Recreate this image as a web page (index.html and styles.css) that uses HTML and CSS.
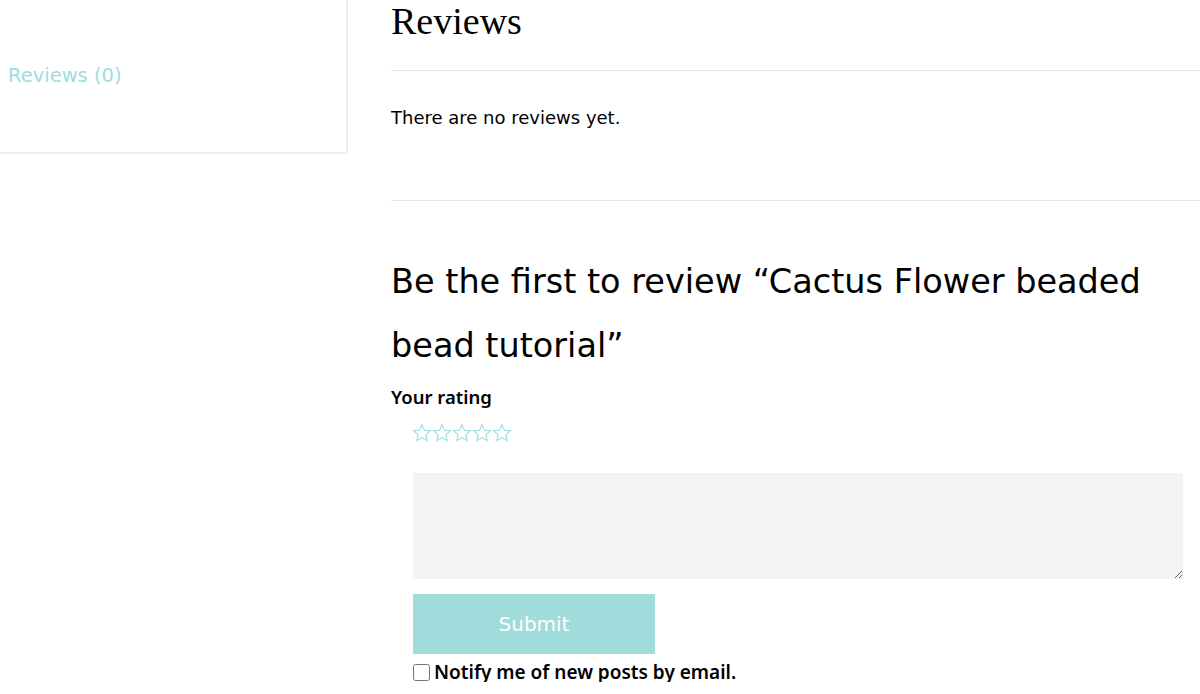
FILE: index.html
```html
<!DOCTYPE html>
<html lang="en">
<head>
<meta charset="utf-8">
<title>Reviews</title>
<link rel="stylesheet" href="styles.css">
</head>
<body>
<div class="page">
  <aside class="sidebar">
    <a class="tab-link" href="#">Reviews (0)</a>
  </aside>
  <main class="content">
    <h2 class="reviews-title">Reviews</h2>
    <hr class="rule rule-top">
    <p class="no-reviews">There are no reviews yet.</p>
    <hr class="rule rule-bottom">
    <h3 class="reply-title">Be the first to review “Cactus Flower beaded bead tutorial”</h3>
    <form class="review-form">
      <label class="rating-label">Your rating</label>
      <div class="stars">
        <svg class="star" viewBox="0 0 20 20"><path d="M10 1.6l2.45 5.6 6.05.55-4.6 4 1.38 5.95L10 14.6l-5.28 3.1 1.38-5.95-4.6-4 6.05-.55z"/></svg>
        <svg class="star" viewBox="0 0 20 20"><path d="M10 1.6l2.45 5.6 6.05.55-4.6 4 1.38 5.95L10 14.6l-5.28 3.1 1.38-5.95-4.6-4 6.05-.55z"/></svg>
        <svg class="star" viewBox="0 0 20 20"><path d="M10 1.6l2.45 5.6 6.05.55-4.6 4 1.38 5.95L10 14.6l-5.28 3.1 1.38-5.95-4.6-4 6.05-.55z"/></svg>
        <svg class="star" viewBox="0 0 20 20"><path d="M10 1.6l2.45 5.6 6.05.55-4.6 4 1.38 5.95L10 14.6l-5.28 3.1 1.38-5.95-4.6-4 6.05-.55z"/></svg>
        <svg class="star" viewBox="0 0 20 20"><path d="M10 1.6l2.45 5.6 6.05.55-4.6 4 1.38 5.95L10 14.6l-5.28 3.1 1.38-5.95-4.6-4 6.05-.55z"/></svg>
      </div>
      <textarea class="comment"></textarea>
      <button type="button" class="submit">Submit</button>
      <label class="notify"><input type="checkbox" class="notify-box"> Notify me of new posts by email.</label>
    </form>
  </main>
</div>
</body>
</html>
```

FILE: styles.css
```css
html, body {
  margin: 0;
  padding: 0;
  background: #fff;
}
body {
  font-family: "DejaVu Sans", "Noto Sans", sans-serif;
  color: #000;
  overflow: hidden;
}
.page {
  display: flex;
  align-items: flex-start;
}
.sidebar {
  width: 346px;
  height: 152px;
  border-right: 2px solid #eeeeee;
  border-bottom: 2px solid #eeeeee;
  box-sizing: content-box;
  display: flex;
  align-items: flex-start;
}
.tab-link {
  margin: 61px 0 0 8px;
  font-size: 19.5px;
  line-height: 30px;
  color: #9edddd;
  text-decoration: none;
}
.content {
  flex: 1;
  padding-left: 43px;
  padding-right: 17px;
}
.reviews-title {
  margin: 0;
  font-family: "Liberation Serif", "DejaVu Serif", serif;
  font-weight: 400;
  font-size: 38px;
  line-height: 42px;
  height: 70px;
}
.rule {
  margin: 0 -17px 0 0;
  border: 0;
  border-top: 1px solid #e6e6e6;
}
.no-reviews {
  margin: 0;
  padding-top: 35px;
  height: 94px;
  font-size: 18px;
  line-height: 24px;
}
.reply-title {
  margin: 0;
  padding-top: 49px;
  font-weight: 400;
  font-size: 33.5px;
  line-height: 64px;
}
.review-form {
  display: flex;
  flex-direction: column;
  align-items: flex-start;
}
.rating-label {
  font-family: "Noto Sans", sans-serif;
  font-size: 18.5px;
  font-weight: 600;
  line-height: 28px;
  margin-top: 5px;
}
.stars {
  display: flex;
  margin: 12px 0 0 21px;
}
.star {
  width: 20px;
  height: 20px;
  fill: none;
  stroke: #9edddd;
  stroke-width: 1.1;
}
.comment {
  margin: 30px 0 0 22px;
  width: 770px;
  height: 106px;
  box-sizing: border-box;
  background: #f3f3f3;
  border: 0;
  resize: vertical;
}
.submit {
  margin: 15px 0 0 22px;
  width: 242px;
  height: 60px;
  background: #9fdcdb;
  border: 0;
  color: #fff;
  font-family: inherit;
  font-size: 20px;
}
.notify {
  margin: 8px 0 0 22px;
  display: flex;
  align-items: center;
  font-family: "Noto Sans", sans-serif;
  font-size: 19px;
  font-weight: 600;
  line-height: 20px;
}
.notify-box {
  margin: 0 4px 0 0;
  width: 17px;
  height: 17px;
}
```
